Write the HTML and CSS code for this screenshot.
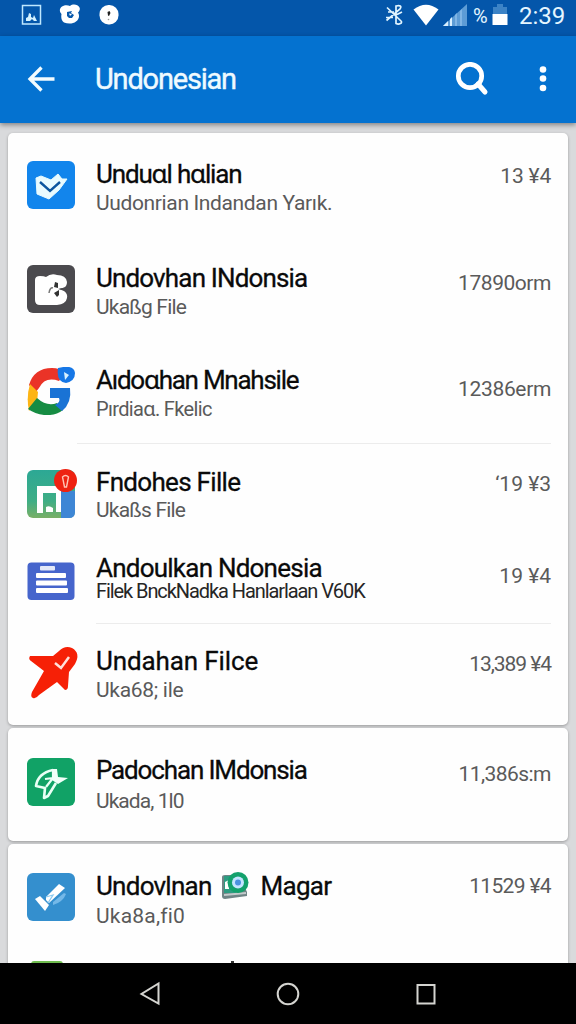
FILE: index.html
```
<!DOCTYPE html>
<html lang="id">
<head>
<meta charset="utf-8">
<title>Undonesian</title>
<link rel="stylesheet" href="styles.css">
</head>
<body>
<div class="screen">
  <header class="status">
    <div class="status-left">
      <svg width="22" height="22" viewBox="0 0 22 22"><rect x="2.500" y="1.500" width="18" height="18.500" fill="none" stroke="#bfe8ff" stroke-width="1.500"/><path d="M6 17v-3l2-1 1-4 2 1v3l2 1 1-3 3 6h-3l-2-2-2 2z" fill="#d5f2ff"/></svg>
      <svg width="22" height="22" viewBox="0 0 22 22"><path d="M3 2.500C6 .5 9 1 11 2c3-2.500 8-1.500 9.500 1.500 1 2-.5 4-1.500 5 2 3 1 7-2 9-3 2.500-8 2.500-12 1-3-2-3-6-2.500-8.500C0 7.500.5 4 3 2.500z" fill="#fff"/><path d="M8 8l5-1-1 2 3 2-2 3-3 0-2-2z" fill="#0758ac"/><path d="M10 9.500l3 .5-2 2z" fill="#fff"/></svg>
      <svg width="22" height="22" viewBox="0 0 22 22"><rect x="1.500" y="1" width="19" height="19.500" rx="9" fill="#fff"/><path d="M9.500 8l2-1 1 2-1.500 3-1-.5z" fill="#222"/><circle cx="10.500" cy="15.500" r=".8" fill="#999"/></svg>
    </div>
    <div class="status-right">
      <svg width="20" height="22" viewBox="0 0 20 22" fill="none" stroke="#e2f5ff" stroke-width="1.700"><path d="M2 3.500l14 13.500c2 2-2 4-5 2.500V2c4-1 6 0 4 3L1.500 16.500M3 8h6M1 13.500h7M17 8l-5 2.500"/></svg>
      <svg class="wifi" width="26" height="22" viewBox="0 0 26 22"><path d="M.5 5.500Q13-4 25.500 5.500L13 21.500z" fill="#fff"/></svg>
      <svg class="signal" width="24" height="23" viewBox="0 0 24 23"><path d="M0 22L24 0v22z" fill="#5d9cd6"/><path d="M1 21l4-4v5H0zM7 15l2-2v9H7z" fill="#d8efff"/><path d="M12 11l2-2v13h-2zM17 7l2-2v17h-2z" fill="#80b5e5"/></svg>
      <span class="pct">%</span>
      <svg class="battery" width="16" height="22" viewBox="0 0 16 22"><path d="M1 10V3h4V0h6v3h4v7z" fill="#3c83c6"/><path d="M.5 10h15v11H.5z" fill="#fff"/></svg>
      <span class="clock">2:39</span>
    </div>
  </header>

  <div class="appbar">
    <svg class="back" width="28" height="28" viewBox="0 0 28 28" fill="none" stroke="#f2fcff" stroke-width="3.300"><path d="M27.500 14H3M14.500 2.500L3 14l11.500 11.500"/></svg>
    <h1 class="heading">Undonesian</h1>
    <svg class="search" width="34" height="34" viewBox="0 0 34 34" fill="none" stroke="#fff"><circle cx="15" cy="14" r="11.700" stroke-width="4.700"/><path d="M23 22l7 8" stroke-width="5" stroke-linecap="round"/></svg>
    <svg class="more" width="8" height="26" viewBox="0 0 8 26" fill="#fff"><circle cx="4" cy="3.500" r="3.300"/><circle cx="4" cy="12.500" r="3.300"/><circle cx="4" cy="22" r="3.300"/></svg>
  </div>

  <main class="list">
    <section class="card card-main">
      <article class="row r1">
        <svg class="icon" viewBox="0 0 48 48"><rect width="48" height="48" rx="6" fill="#1285ec"/><path d="M9 17l5-2 10 4 7-6 4 5h5l-8 11-10 9-12-5z" fill="#e9fbff" stroke="#e9fbff" stroke-linejoin="round"/><path d="M13 21l10 9 10-9" fill="none" stroke="#0b559f" stroke-width="2.400"/></svg>
        <div class="text"><h2 class="title">Unduɑl hɑlian</h2><p class="sub">Uudonrian Indandan Yarık.</p></div>
        <span class="value">13 ¥4</span>
      </article>
      <article class="row r2">
        <svg class="icon" viewBox="0 0 48 48"><rect width="48" height="48" rx="6" fill="#4b4a4e"/><path d="M8 15q0-4 5-4 4 0 6 1 5-4 11-2 9 0 10 7 0 5-4 6l-4 1 5 2q4 3 3 7-1 6-10 7H13q-5 0-5-5z" fill="#fff"/><path d="M40 22l-9 2 9 2z" fill="#4b4a4e"/><path d="M28 17l3 1 0 5-4-1zM27 28l5-3 0 5-2 2z" fill="#333"/><path d="M22 28q1-6 4-5" fill="none" stroke="#777" stroke-width="1.500"/></svg>
        <div class="text"><h2 class="title">Undovhan INdonsia</h2><p class="sub">Ukaßg File</p></div>
        <span class="value">17890orm</span>
      </article>
      <article class="row r3">
        <svg class="icon" viewBox="0 0 48 48"><path d="M2 18Q7 1 25 1q8 0 13 5l-6 8q-14-5-20 7l-4 5z" fill="#ea3327"/><path d="M3 17l8 8-1 10-8 9Q-1 30 3 17z" fill="#fdb515"/><path d="M1 42l9-11q10 9 20 5l6 7q-8 6-19 5-9-1-16-6z" fill="#168c43"/><path d="M23 21h20q2 15-8 23l-7-6q6-3 4-7h-9z" fill="#1a73d5"/><path d="M31 1q16-4 17 5 0 8-9 10-10-1-8-15z" fill="#1677e6"/><path d="M37 5l5 3-4 5z" fill="#d9f2ff"/></svg>
        <div class="text"><h2 class="title">Aıdoɑhan Mnahsile</h2><p class="sub">Pırdiaɑ. Fkelic</p></div>
        <span class="value">12386erm</span>
      </article>
      <article class="row r4">
        <svg class="icon" viewBox="0 0 48 48"><defs><linearGradient id="teal" x2="0" y2="1"><stop offset="0" stop-color="#2ca895"/><stop offset=".65" stop-color="#3fae85"/><stop offset="1" stop-color="#79af66"/></linearGradient></defs><rect width="48" height="48" rx="6" fill="url(#teal)"/><path d="M34 21h14v21q0 6-6 6h-8z" fill="#3e86d5"/><path d="M10 43V16h24v26h-5V23H16v20z" fill="#fff"/><path d="M19 42v-5q3-2 7 1v4z" fill="#fff"/><circle cx="38.500" cy="10.500" r="11.500" fill="#ee2211"/><path d="M35.500 7q3-3 6 0l-2 10h-2z" fill="none" stroke="#ffc4b5" stroke-width="1.400"/></svg>
        <div class="text"><h2 class="title">Fndohes Fille</h2><p class="sub">Ukaßs File</p></div>
        <span class="value">‘19 ¥3</span>
      </article>
      <article class="row r5">
        <svg class="icon" viewBox="0 0 48 48"><rect x=".5" y="5.500" width="47" height="37.500" rx="4" fill="#4665cc"/><g fill="#fff"><rect x="13" y="9" width="15" height="4.500" rx="1" opacity=".85"/><rect x="9" y="16" width="30" height="5" rx="1"/><rect x="9" y="23.500" width="31" height="5" rx="1"/><rect x="9" y="31" width="32" height="5" rx="1"/></g></svg>
        <div class="text"><h2 class="title">Andoulkan Ndonesia</h2><p class="sub">Filek BnckNadka Hanlarlaan V60K</p></div>
        <span class="value">19 ¥4</span>
      </article>
      <article class="row r6">
        <svg class="icon" viewBox="0 0 48 52"><path d="M3 9Q1 12 4 14l13 10L5 45q-2 5 1 6 3 1 6-3l18-13 8 8q3 0 3-4l1-14 6-8Q54 6 45 1 38-2 32 4l-6 5z" fill="#f62006"/><path d="M28 16l6 5 8-11" fill="none" stroke="#ffe1da" stroke-width="2.500"/></svg>
        <div class="text"><h2 class="title">Undahan Filce</h2><p class="sub">Uka68; ile</p></div>
        <span class="value">13,389 ¥4</span>
      </article>
    </section>

    <section class="card card-mid">
      <article class="row r7">
        <svg class="icon" viewBox="0 0 48 48"><rect width="48" height="48" rx="6" fill="#11a266"/><path d="M26 12Q11 15 9 28l9 2-1 10 4-2 8-13" fill="none" stroke="#e9fff5" stroke-width="2.600" stroke-linejoin="round"/><path d="M26 11v9l-8 1M26 20l-7 9" fill="none" stroke="#e9fff5" stroke-width="2.200"/><path d="M26 11h4l1 8 10 1-10 6-6-4z" fill="#f1fff8"/></svg>
        <div class="text"><h2 class="title">Padochan IMdonsia</h2><p class="sub">Ukada, 1l0</p></div>
        <span class="value">11,386s:m</span>
      </article>
    </section>

    <section class="card card-last">
      <article class="row r8">
        <svg class="icon" viewBox="0 0 48 48"><rect width="48" height="48" rx="6" fill="#348fce"/><path d="M26 29l11-9 2 1q-3 8-13 11z" fill="#74b8e8"/><path d="M19 24L32 11l6 4-16 15-3-3z" fill="#fff"/><path d="M8 26l5-3 9 9-4 6z" fill="#fff"/><path d="M19 24l7-2-5 8" fill="none" stroke="#8bcaf1" stroke-width="1.300"/></svg>
        <div class="text"><h2 class="title">Undovlnan<svg class="inline-icon" width="28" height="28" viewBox="0 0 28 28"><path d="M1 5q0-2 3-2h14l8 17v4L4 27q-3 0-3-3z" fill="#708486"/><path d="M3 4h9l3 17H3z" fill="#2e9c82"/><path d="M4 10l4-2v9H4z" fill="#fff"/><path d="M3 23l22-2" stroke="#c4cbcc" stroke-width="2"/><circle cx="17" cy="10.500" r="10.500" fill="#13a16c"/><circle cx="17" cy="10.500" r="6" fill="#c3e4ff"/><circle cx="17" cy="10.500" r="3" fill="#4a91df"/></svg>Magar</h2><p class="sub">Uka8a,fi0</p></div>
        <span class="value">11529 ¥4</span>
      </article>
      <div class="peek"><span class="peek-icon"></span><span class="peek-mark"></span></div>
    </section>
  </main>

  <nav class="navbar">
    <svg width="24" height="26" viewBox="0 0 24 26" fill="none" stroke="#d4d4d0" stroke-width="2"><path d="M20.500 2.500v20L3.500 13z"/></svg>
    <svg width="24" height="26" viewBox="0 0 24 26" fill="none" stroke="#d4d4d0" stroke-width="2"><circle cx="12" cy="13" r="10.300"/></svg>
    <svg width="24" height="26" viewBox="0 0 24 26" fill="none" stroke="#d4d4d0" stroke-width="2"><rect x="3.500" y="4" width="17" height="18.500"/></svg>
  </nav>
</div>
</body>
</html>
```
FILE: styles.css
```
* { box-sizing: border-box; }
body { margin: 0; font-family: Roboto, "Noto Sans", sans-serif; }
h1, h2, p { margin: 0; font-weight: 400; }
svg { display: block; flex: none; }

.screen { width: 576px; height: 1024px; display: flex; flex-direction: column; overflow: hidden; background: #d9dadc; }

.status { height: 36px; flex: none; display: flex; justify-content: space-between; padding: 4px 11px 0 20px; background: #0456aa; color: #e6f6ff; }
.status-left { display: flex; gap: 17px; }
.status-right { display: flex; }
.wifi { margin-left: 8px; }
.signal { margin-left: 4px; }
.pct { width: 17px; margin-left: 6px; font-size: 20px; line-height: 24px; letter-spacing: -1px; }
.battery { margin-left: 2px; }
.clock { width: 46px; margin-left: 11px; font-size: 24px; line-height: 25px; }

.appbar { height: 87px; flex: none; display: flex; align-items: center; padding: 0 29px 2px 27px; background: #0472d0; box-shadow: 0 2px 5px rgba(0, 0, 0, .4); z-index: 1; }
.heading { flex: 1; margin-left: 40px; font-size: 29px; line-height: 36px; letter-spacing: -1.2px; color: #eefaff; -webkit-text-stroke: .4px #eefaff; }
.more { margin-left: 50px; }

.list { flex: 1; min-height: 0; overflow: hidden; display: flex; flex-direction: column; gap: 3px; padding: 10px 8px 0; }
.card { flex: none; border-radius: 5px; background: #fefefe; box-shadow: 0 1px 3px rgba(0, 0, 0, .3); overflow: hidden; }
.card-main { height: 592px; }
.card-mid { height: 113px; }
.card-last { height: 130px; }

.row { display: flex; align-items: flex-start; padding: 0 17px 0 19px; }
.icon { width: 48px; height: 48px; }
.text { flex: 1; min-width: 0; margin-left: 21px; white-space: nowrap; }
.title { display: flex; align-items: center; height: 28px; font-size: 26px; line-height: 28px; color: #0a0a0a; white-space: pre; -webkit-text-stroke: .3px #0a0a0a; }
.sub { font-size: 21px; line-height: 22px; color: #5a5a5a; }
.value { font-size: 21px; line-height: 28px; color: #5a5a5a; white-space: nowrap; }
.inline-icon { margin: 0 12px 0 9px; }

.r1 { height: 102px; padding-top: 27px; }
.r1 .icon { margin-top: 1px; }
.r1 .title { letter-spacing: -1.15px; }
.r1 .sub { margin-top: 4px; letter-spacing: -.36px; }
.r1 .value { margin-top: 2px; letter-spacing: -.2px; }

.r2 { height: 104px; padding-top: 29px; }
.r2 .icon { margin-top: 1px; }
.r2 .title { letter-spacing: -.85px; }
.r2 .sub { margin-top: 4px; letter-spacing: -.8px; }
.r2 .value { margin-top: 5px; letter-spacing: -.45px; }

.r3 { height: 104px; padding-top: 27px; }
.r3 .icon { margin-top: 1px; }
.r3 .title { letter-spacing: -1.25px; }
.r3 .sub { margin-top: 4px; font-size: 20px; letter-spacing: -.65px; }
.r3 .value { margin-top: 9px; letter-spacing: -.35px; }

.r4 { height: 87px; padding-top: 25px; background: linear-gradient(#ececec, #ececec) 69px 0 / 474px 1px no-repeat; }
.r4 .icon { margin-top: 2px; overflow: visible; }
.r4 .title { letter-spacing: -.7px; }
.r4 .sub { margin-top: 3px; letter-spacing: -.8px; }
.r4 .value { margin-top: 2px; }

.r5 { height: 93px; padding-top: 25px; }
.r5 .icon { margin-top: 2px; }
.r5 .title { height: 26px; line-height: 26px; letter-spacing: -.77px; }
.r5 .sub { font-size: 20px; line-height: 20px; letter-spacing: -1.08px; color: #262626; }
.r5 .value { margin-top: 7px; }

.r6 { height: 101px; padding-top: 24px; background: linear-gradient(#ececec, #ececec) 88px 0 / 455px 1px no-repeat; }
.r6 .icon { height: 52px; overflow: visible; }
.r6 .title { letter-spacing: -.12px; }
.r6 .sub { margin-top: 4px; letter-spacing: -.7px; letter-spacing: -.3px; }
.r6 .value { margin-top: 3px; letter-spacing: -1.05px; }

.r7 { padding-top: 28px; }
.r7 .icon { margin-top: 2px; }
.r7 .title { letter-spacing: -1.15px; }
.r7 .sub { margin-top: 6px; letter-spacing: -.95px; }
.r7 .value { margin-top: 4px; letter-spacing: -.55px; }

.r8 { height: 117px; padding-top: 28px; }
.r8 .icon { margin-top: 1px; }
.r8 .title { letter-spacing: -.75px; }
.r8 .sub { margin-top: 5px; letter-spacing: .2px; }
.r8 .value { letter-spacing: -.65px; }

.peek { display: flex; gap: 160px; padding-left: 23px; }
.peek-icon { width: 32px; height: 3px; background: #70bd50; border-radius: 3px 3px 0 0; }
.peek-mark { width: 3px; height: 3px; margin-left: 8px; background: #333; }

.navbar { height: 61px; flex: none; display: flex; justify-content: center; align-items: center; gap: 114px; background: #000; z-index: 1; }
```
